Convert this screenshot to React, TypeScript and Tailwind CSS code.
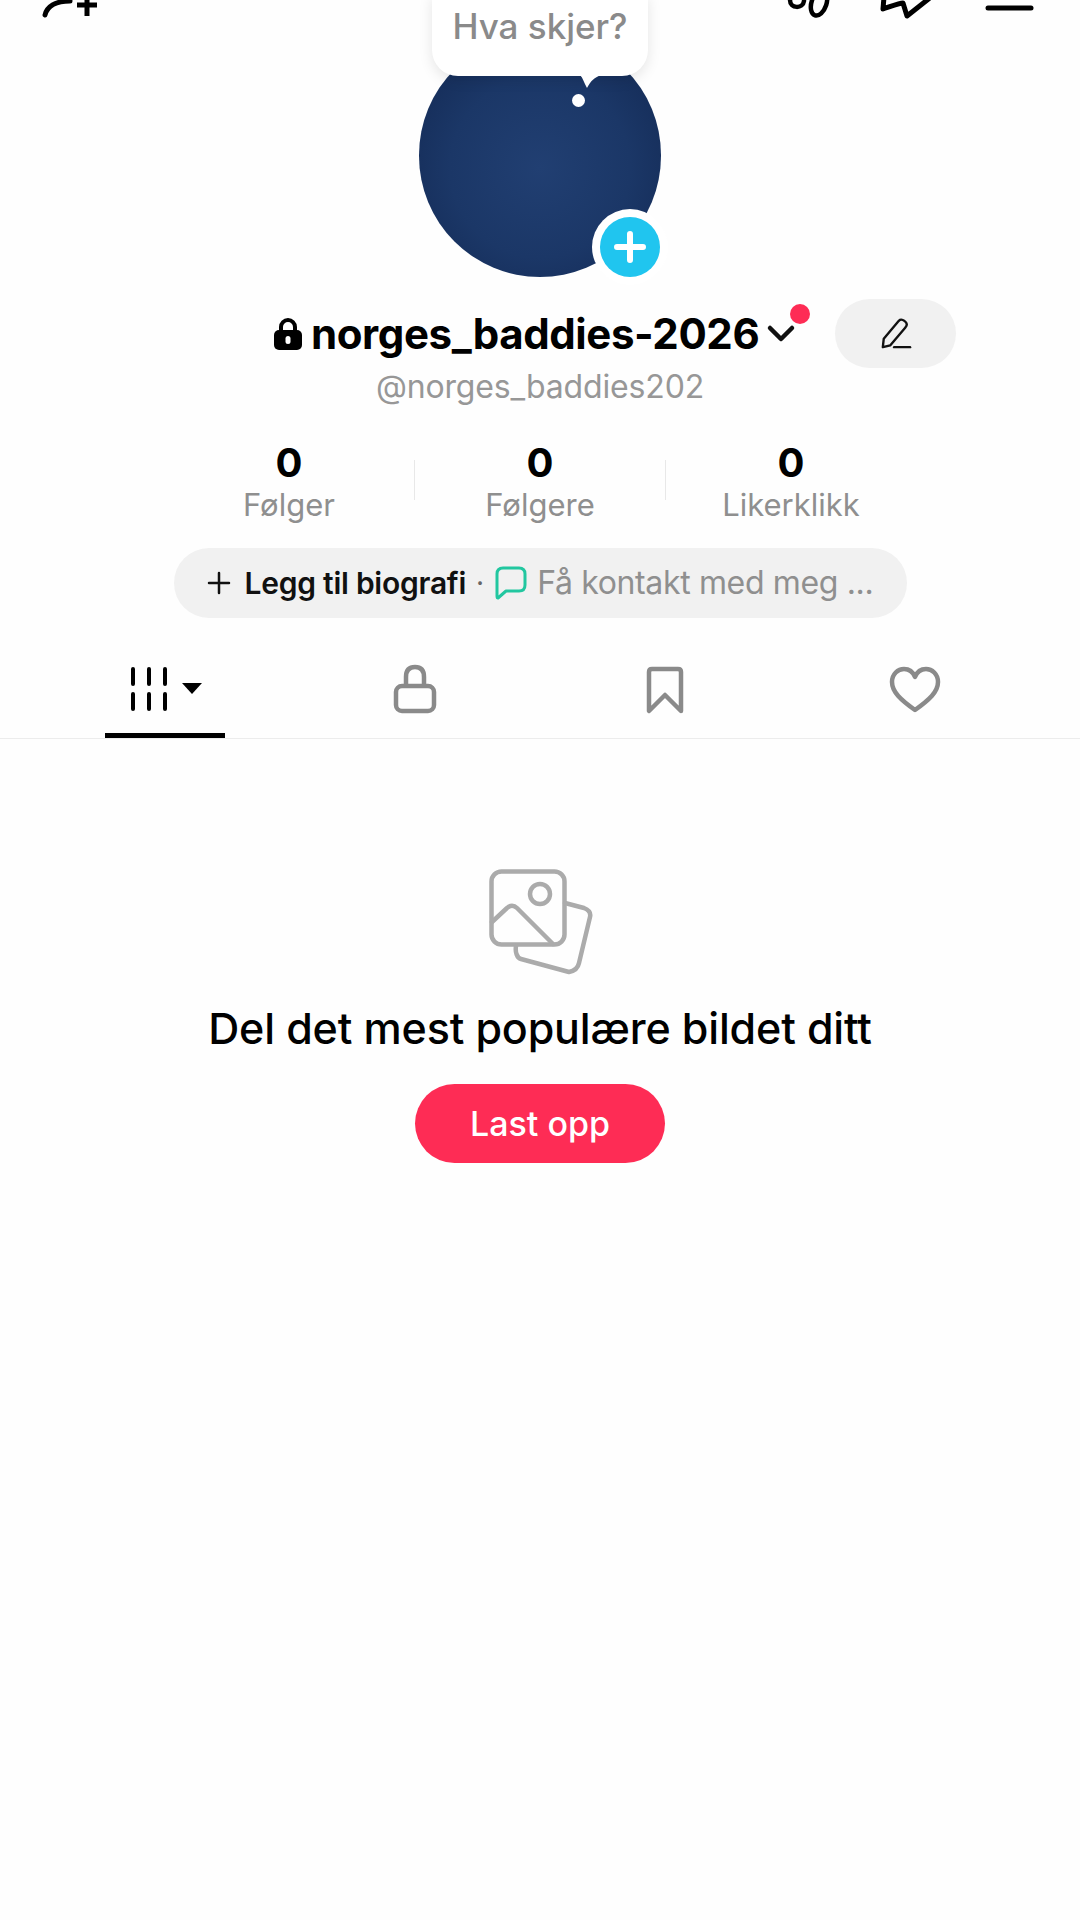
export default function App() {
  const stats = [
    ["Følger", true],
    ["Følgere", true],
    ["Likerklikk", false],
  ] as const;
  return (
    <div className="w-[1080px] h-[1920px] overflow-hidden bg-[#fefefe] flex flex-col font-['Inter','Liberation_Sans',sans-serif]">
      <header className="h-[34px] shrink-0 relative">
        <svg width="1080" height="34" viewBox="0 0 1080 34" fill="none" stroke="#000" strokeLinecap="round" className="block">
          <path d="M45 15 C47 7 55 1 70 1" strokeWidth="5" />
          <path d="M77 5 H97 M87 -3 V16" strokeWidth="5" strokeLinecap="butt" />
          <path d="M790 0 C790 9 803 9 804 1" strokeWidth="4.5" />
          <ellipse cx="819" cy="3" rx="7.5" ry="13" transform="rotate(18 819 3)" strokeWidth="4.5" />
          <path d="M884 -3 L883 9 C892 6 899 3 903 3 L907 16 L931 -3" strokeWidth="5" strokeLinejoin="round" />
          <path d="M988 8 H1031" strokeWidth="5" />
        </svg>
      </header>

      <div className="relative self-center w-[242px] h-[243px] shrink-0">
        <div className="w-full h-full rounded-full bg-[radial-gradient(circle_at_50%_55%,#213f72_0%,#1b3767_50%,#11264f_100%)]" />
        <div className="absolute left-[13px] top-[-40px] w-[216px] h-[82px] bg-white rounded-b-[26px] shadow-[0_4px_14px_rgba(0,0,0,0.10)] flex items-start justify-center pt-[10px]">
          <span className="text-[35px] leading-[44px] font-medium text-[#8a8a8a]">Hva skjer?</span>
          <svg width="30" height="18" viewBox="0 0 30 18" className="absolute left-[140px] top-[81px]">
            <path d="M0 0 H30 C22 2 19 6 15 13 C12 8 11 3 8 0 Z" fill="#fff" />
          </svg>
        </div>
        <div className="absolute left-[153px] top-[60px] w-[13px] h-[13px] rounded-full bg-white" />
        <div className="absolute left-[173px] top-[175px] w-[76px] h-[76px] rounded-full bg-white flex items-center justify-center">
          <div className="w-[60px] h-[60px] rounded-full bg-[#20c5ef] flex items-center justify-center">
            <svg width="34" height="34" viewBox="0 0 34 34" fill="none" stroke="#fff" strokeWidth="6" strokeLinecap="round">
              <path d="M17 4 V30 M4 17 H30" />
            </svg>
          </div>
        </div>
      </div>

      <div className="mt-[22px] h-[69px] shrink-0 flex items-center pl-[274px]">
        <svg width="28" height="32" viewBox="0 0 28 32" className="shrink-0">
          <path d="M7 14 V9 a7 7 0 0 1 14 0 V14" fill="none" stroke="#000" strokeWidth="4" />
          <rect x="0" y="12" width="28" height="20" rx="5" fill="#000" />
          <rect x="11.5" y="18" width="5" height="8" rx="2.5" fill="#fff" />
        </svg>
        <span className="ml-[9px] text-[42px] leading-[48px] font-bold text-black whitespace-nowrap tracking-[-0.4px]">norges_baddies-2026</span>
        <div className="relative ml-[6px] w-[32px] h-[32px] flex items-center justify-center">
          <svg width="30" height="20" viewBox="0 0 30 20" fill="none" stroke="#111" strokeWidth="4.5" strokeLinecap="round" strokeLinejoin="round">
            <path d="M4 4 L15 15 L26 4" />
          </svg>
          <div className="absolute left-[25px] top-[-14px] w-[20px] h-[20px] rounded-full bg-[#fe2c55]" />
        </div>
        <div className="ml-[38px] w-[121px] h-[69px] rounded-[35px] bg-[#f1f1f1] flex items-center justify-center">
          <svg width="32" height="32" viewBox="0 0 34 34" fill="none" stroke="#111" strokeWidth="2.5" strokeLinejoin="round" strokeLinecap="round">
            <path d="M3 31 L4 22 L20 3 C22 1 25 2 27 4 C29 6 29 8 27 10 L11 29 Z" />
            <path d="M15 31 H32" />
          </svg>
        </div>
      </div>

      <div className="self-center text-center text-[32px] leading-[40px] text-[#979797] mt-[-1px] whitespace-nowrap tracking-[-0.15px]">@norges_baddies202</div>

      <div className="self-center flex items-center mt-[33px] shrink-0">
        {stats.map(([label, divider]) => (
          <div key={label} className="flex items-center">
            <div className="w-[250px] flex flex-col items-center">
              <span className="text-[40px] leading-[46px] font-bold text-black">0</span>
              <span className="text-[31px] leading-[38px] text-[#8f8f8f]">{label}</span>
            </div>
            {divider && <div className="w-px h-[40px] mb-[4px] bg-[#e8e8e8]" />}
          </div>
        ))}
      </div>

      <div className="self-center mt-[24px] w-[733px] h-[70px] shrink-0 rounded-[35px] bg-[#f1f1f1] flex items-center pl-[33px] whitespace-nowrap">
        <svg width="24" height="24" viewBox="0 0 24 24" fill="none" stroke="#111" strokeWidth="2.5" strokeLinecap="round" className="shrink-0">
          <path d="M12 2 V22 M2 12 H22" />
        </svg>
        <span className="ml-[14px] text-[30px] leading-[36px] font-semibold text-[#111] tracking-[-0.25px]">Legg til biografi</span>
        <span className="ml-[10px] text-[28px] text-[#666]">·</span>
        <svg width="32" height="34" viewBox="0 0 32 34" fill="none" stroke="#22c7a0" strokeWidth="3" strokeLinejoin="round" className="ml-[11px] shrink-0">
          <path d="M2 8 C2 4 4 2 8 2 H24 C28 2 30 4 30 8 V19 C30 23 28 25 24 25 H11 L3 32 C2 32 2 31 2 30 Z" />
        </svg>
        <span className="ml-[10px] text-[32px] leading-[36px] text-[#8f8f8f] tracking-[-0.35px]">Få kontakt med meg ...</span>
      </div>

      <div className="mt-[26px] h-[95px] shrink-0 border-b border-[#ececec] flex pl-[40px]">
        <div className="relative w-[250px] flex items-start justify-center pt-[22px]">
          <svg width="74" height="46" viewBox="0 0 74 46" fill="none" stroke="#000" strokeWidth="4" strokeLinecap="round" className="ml-[4px]">
            <path d="M3 3 V18 M19 3 V18 M35 3 V18 M3 28 V43 M19 28 V43 M35 28 V43" />
            <path d="M52 17 H72 L62 28 Z" fill="#000" stroke="none" />
          </svg>
          <div className="absolute left-[65px] bottom-[0px] w-[120px] h-[5px] bg-black" />
        </div>
        <div className="w-[250px] flex items-start justify-center pt-[20px]">
          <svg width="44" height="50" viewBox="0 0 44 50" fill="none" stroke="#8a8a8a" strokeWidth="4.5" strokeLinejoin="round">
            <path d="M13 22 V13 C13 6 16 3 22 3 C28 3 31 6 31 13 V22" />
            <rect x="3" y="22" width="38" height="25" rx="6" />
          </svg>
        </div>
        <div className="w-[250px] flex items-start justify-center pt-[22px]">
          <svg width="38" height="48" viewBox="0 0 38 48" fill="none" stroke="#8a8a8a" strokeWidth="4.5" strokeLinejoin="round">
            <path d="M3 6 C3 4 4 3 6 3 H32 C34 3 35 4 35 6 V45 L19 29 L3 45 Z" />
          </svg>
        </div>
        <div className="w-[250px] flex items-start justify-center pt-[22px]">
          <svg width="52" height="48" viewBox="0 0 52 48" fill="none" stroke="#8a8a8a" strokeWidth="4.5" strokeLinejoin="round">
            <path d="M26 44 C12 34 3 26 3 16 C3 8 9 3 15 3 C20 3 24 6 26 11 C28 6 32 3 37 3 C43 3 49 8 49 16 C49 26 40 34 26 44 Z" />
          </svg>
        </div>
      </div>

      <div className="flex flex-col items-center shrink-0">
        <svg width="104" height="106" viewBox="0 0 104 106" fill="none" stroke="#ababab" strokeWidth="4.5" strokeLinejoin="round" strokeLinecap="round" className="mt-[130px] ml-[2px]">
          <rect x="2.5" y="2.5" width="73" height="73" rx="10" />
          <circle cx="51" cy="25" r="10" />
          <path d="M3 53 L18 39 C21 36 25 36 28 39 L64 75" />
          <path d="M76 34 L95 39 C100 41 102 44 101 48 L90 94 C89 99 85 102 80 103 L32 90 C28 89 26 83 27 77" />
        </svg>
        <div className="mt-[29px] text-[43px] leading-[48px] font-medium text-black tracking-[-0.15px] whitespace-nowrap">Del det mest populære bildet ditt</div>
        <div className="mt-[32px] w-[250px] h-[79px] rounded-[40px] bg-[#fe2c55] flex items-center justify-center text-[34px] font-medium text-white">Last opp</div>
      </div>
    </div>
  );
}
